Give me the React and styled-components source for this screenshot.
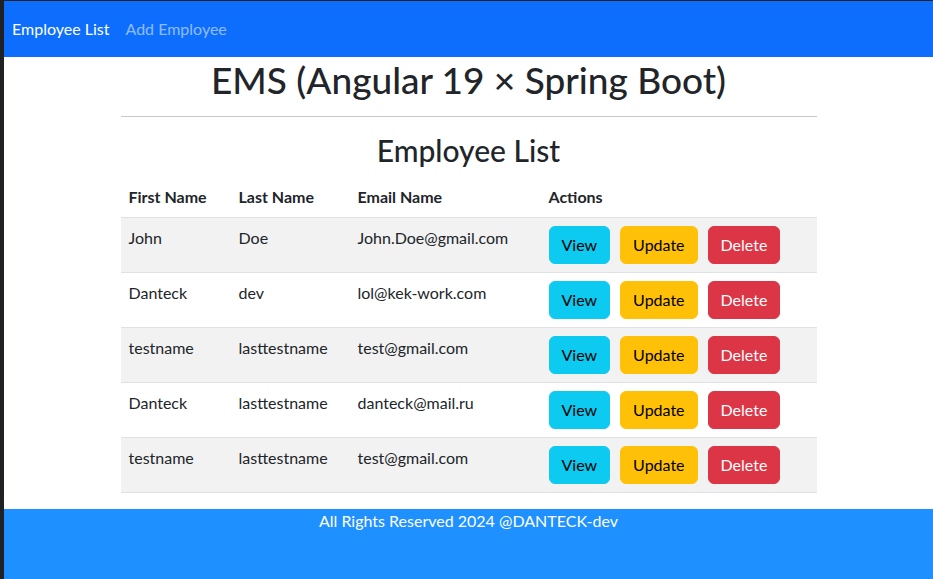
import React from "react";
import styled, { createGlobalStyle } from "styled-components";

const GlobalStyle = createGlobalStyle`
  html, body { margin: 0; padding: 0; }
  body {
    background: #202124;
    font-family: "Lato", "Noto Sans", sans-serif;
    color: #212529;
    font-size: 16px;
    line-height: 1.5;
  }
  * { box-sizing: border-box; }
`;

const Frame = styled.div`
  min-height: 579px;
  padding: 1px 0 0 4px;
  display: flex;
`;

const Shell = styled.div`
  flex: 1;
  background: #fff;
  display: flex;
  flex-direction: column;
`;

const Navbar = styled.nav`
  height: 56px;
  background: #0d6efd;
  display: flex;
  align-items: center;
  padding: 0;
`;

const NavLink = styled.a`
  padding: 8px;
  font-size: 16px;
  text-decoration: none;
  color: ${(p) => (p.$active ? "#fff" : "rgba(255,255,255,0.55)")};
  cursor: pointer;
`;

const Container = styled.main`
  width: 720px;
  margin: 0 auto;
  padding: 0 12px;
`;

const Title = styled.h1`
  margin: 0 0 8px;
  padding-top: 3px;
  font-size: 37px;
  font-weight: 500;
  line-height: 40px;
  text-align: center;
`;

const Rule = styled.hr`
  margin: 16px 0;
  border: 0;
  border-top: 1px solid #c8c9ca;
`;

const Subtitle = styled.h2`
  margin: 0 0 8px;
  font-size: 30px;
  font-weight: 500;
  line-height: 35.5px;
  text-align: center;
`;

const Table = styled.table`
  width: 100%;
  border-collapse: collapse;
  margin-bottom: 16px;
`;

const Th = styled.th`
  text-align: left;
  font-weight: 700;
  padding: 8px;
  border-bottom: 1px solid #dee2e6;
  width: ${(p) => p.$w || "auto"};
`;

const Row = styled.tr`
  background: ${(p) => (p.$striped ? "#f2f2f2" : "#fff")};
`;

const Td = styled.td`
  padding: 8px;
  vertical-align: top;
  border-bottom: 1px solid #dee2e6;
`;

const Actions = styled.div`
  display: flex;
  gap: 10px;
`;

const colors = {
  info: { bg: "#0dcaf0", fg: "#000" },
  warning: { bg: "#ffc107", fg: "#000" },
  danger: { bg: "#dc3545", fg: "#fff" },
};

const Button = styled.button`
  font-family: inherit;
  font-size: 16px;
  line-height: 1.5;
  padding: 6px 12px;
  border: 1px solid ${(p) => colors[p.$variant].bg};
  border-radius: 6px;
  background: ${(p) => colors[p.$variant].bg};
  color: ${(p) => colors[p.$variant].fg};
  cursor: pointer;
`;

const Footer = styled.footer`
  flex: 1;
  min-height: 70px;
  background: #1e90ff;
  color: #fff;
  text-align: center;
  font-size: 16px;
  line-height: 24px;
`;

const employees = [
  ["John", "Doe", "John.Doe@gmail.com"],
  ["Danteck", "dev", "lol@kek-work.com"],
  ["testname", "lasttestname", "test@gmail.com"],
  ["Danteck", "lasttestname", "danteck@mail.ru"],
  ["testname", "lasttestname", "test@gmail.com"],
];

export default function App() {
  return (
    <>
      <GlobalStyle />
      <Frame>
        <Shell>
          <Navbar>
            <NavLink $active>Employee List</NavLink>
            <NavLink>Add Employee</NavLink>
          </Navbar>
          <Container>
            <Title>EMS (Angular 19 × Spring Boot)</Title>
            <Rule />
            <Subtitle>Employee List</Subtitle>
            <Table>
              <thead>
                <tr>
                  <Th $w="110px">First Name</Th>
                  <Th $w="119px">Last Name</Th>
                  <Th $w="191px">Email Name</Th>
                  <Th>Actions</Th>
                </tr>
              </thead>
              <tbody>
                {employees.map((e, i) => (
                  <Row key={i} $striped={i % 2 === 0}>
                    <Td>{e[0]}</Td>
                    <Td>{e[1]}</Td>
                    <Td>{e[2]}</Td>
                    <Td>
                      <Actions>
                        <Button $variant="info">View</Button>
                        <Button $variant="warning">Update</Button>
                        <Button $variant="danger">Delete</Button>
                      </Actions>
                    </Td>
                  </Row>
                ))}
              </tbody>
            </Table>
          </Container>
          <Footer>All Rights Reserved 2024 @DANTECK-dev</Footer>
        </Shell>
      </Frame>
    </>
  );
}
